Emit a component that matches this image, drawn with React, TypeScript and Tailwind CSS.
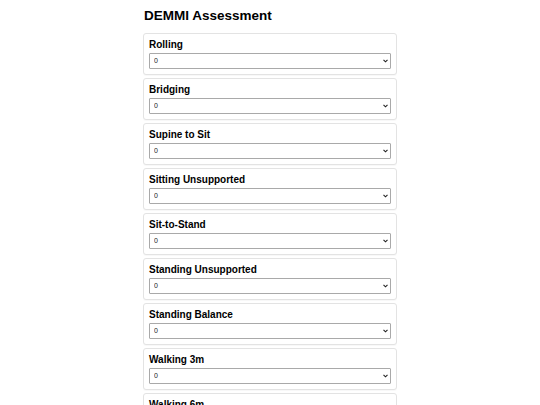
import { useState } from 'react';

const ITEMS = [
  'Rolling',
  'Bridging',
  'Supine to Sit',
  'Sitting Unsupported',
  'Sit-to-Stand',
  'Standing Unsupported',
  'Standing Balance',
  'Walking 3m',
  'Walking 6m',
  'Walking 10m',
  'Jump',
];

export default function App() {
  const [scores, setScores] = useState<Record<string, string>>({});

  return (
    <div className="min-h-screen bg-white font-['Liberation_Sans',Arial,sans-serif] text-black">
      <div className="w-[254px] mx-auto pt-[8px]">
        <h1 className="text-[13.5px] leading-[16px] font-bold mb-[9px] pl-[1px]">DEMMI Assessment</h1>
        <div className="flex flex-col gap-[3px]">
          {ITEMS.map((item) => (
            <div
              key={item}
              className="border border-[#e3e3e3] rounded-[3px] bg-white p-[5px] shadow-[0_1px_1px_rgba(0,0,0,0.03)]"
            >
              <label className="block text-[10px] leading-[12px] font-bold mb-[2px]">{item}</label>
              <div className="relative">
                <select
                  value={scores[item] || '0'}
                  onChange={(e) => setScores({ ...scores, [item]: e.target.value })}
                  className="block w-full h-[16px] appearance-none text-[7px] leading-[14px] text-[#222] border border-[#a9a9a9] rounded-[1px] bg-white pl-[4px] pr-[12px] outline-none"
                >
                  <option value="0">0</option>
                  <option value="1">1</option>
                  <option value="2">2</option>
                </select>
                <svg
                  className="absolute right-[3px] top-[6px] pointer-events-none"
                  width="5"
                  height="4"
                  viewBox="0 0 5 4"
                >
                  <path d="M0.5 0.8 L2.5 2.8 L4.5 0.8" fill="none" stroke="#222" strokeWidth="1.1" />
                </svg>
              </div>
            </div>
          ))}
        </div>
      </div>
    </div>
  );
}
